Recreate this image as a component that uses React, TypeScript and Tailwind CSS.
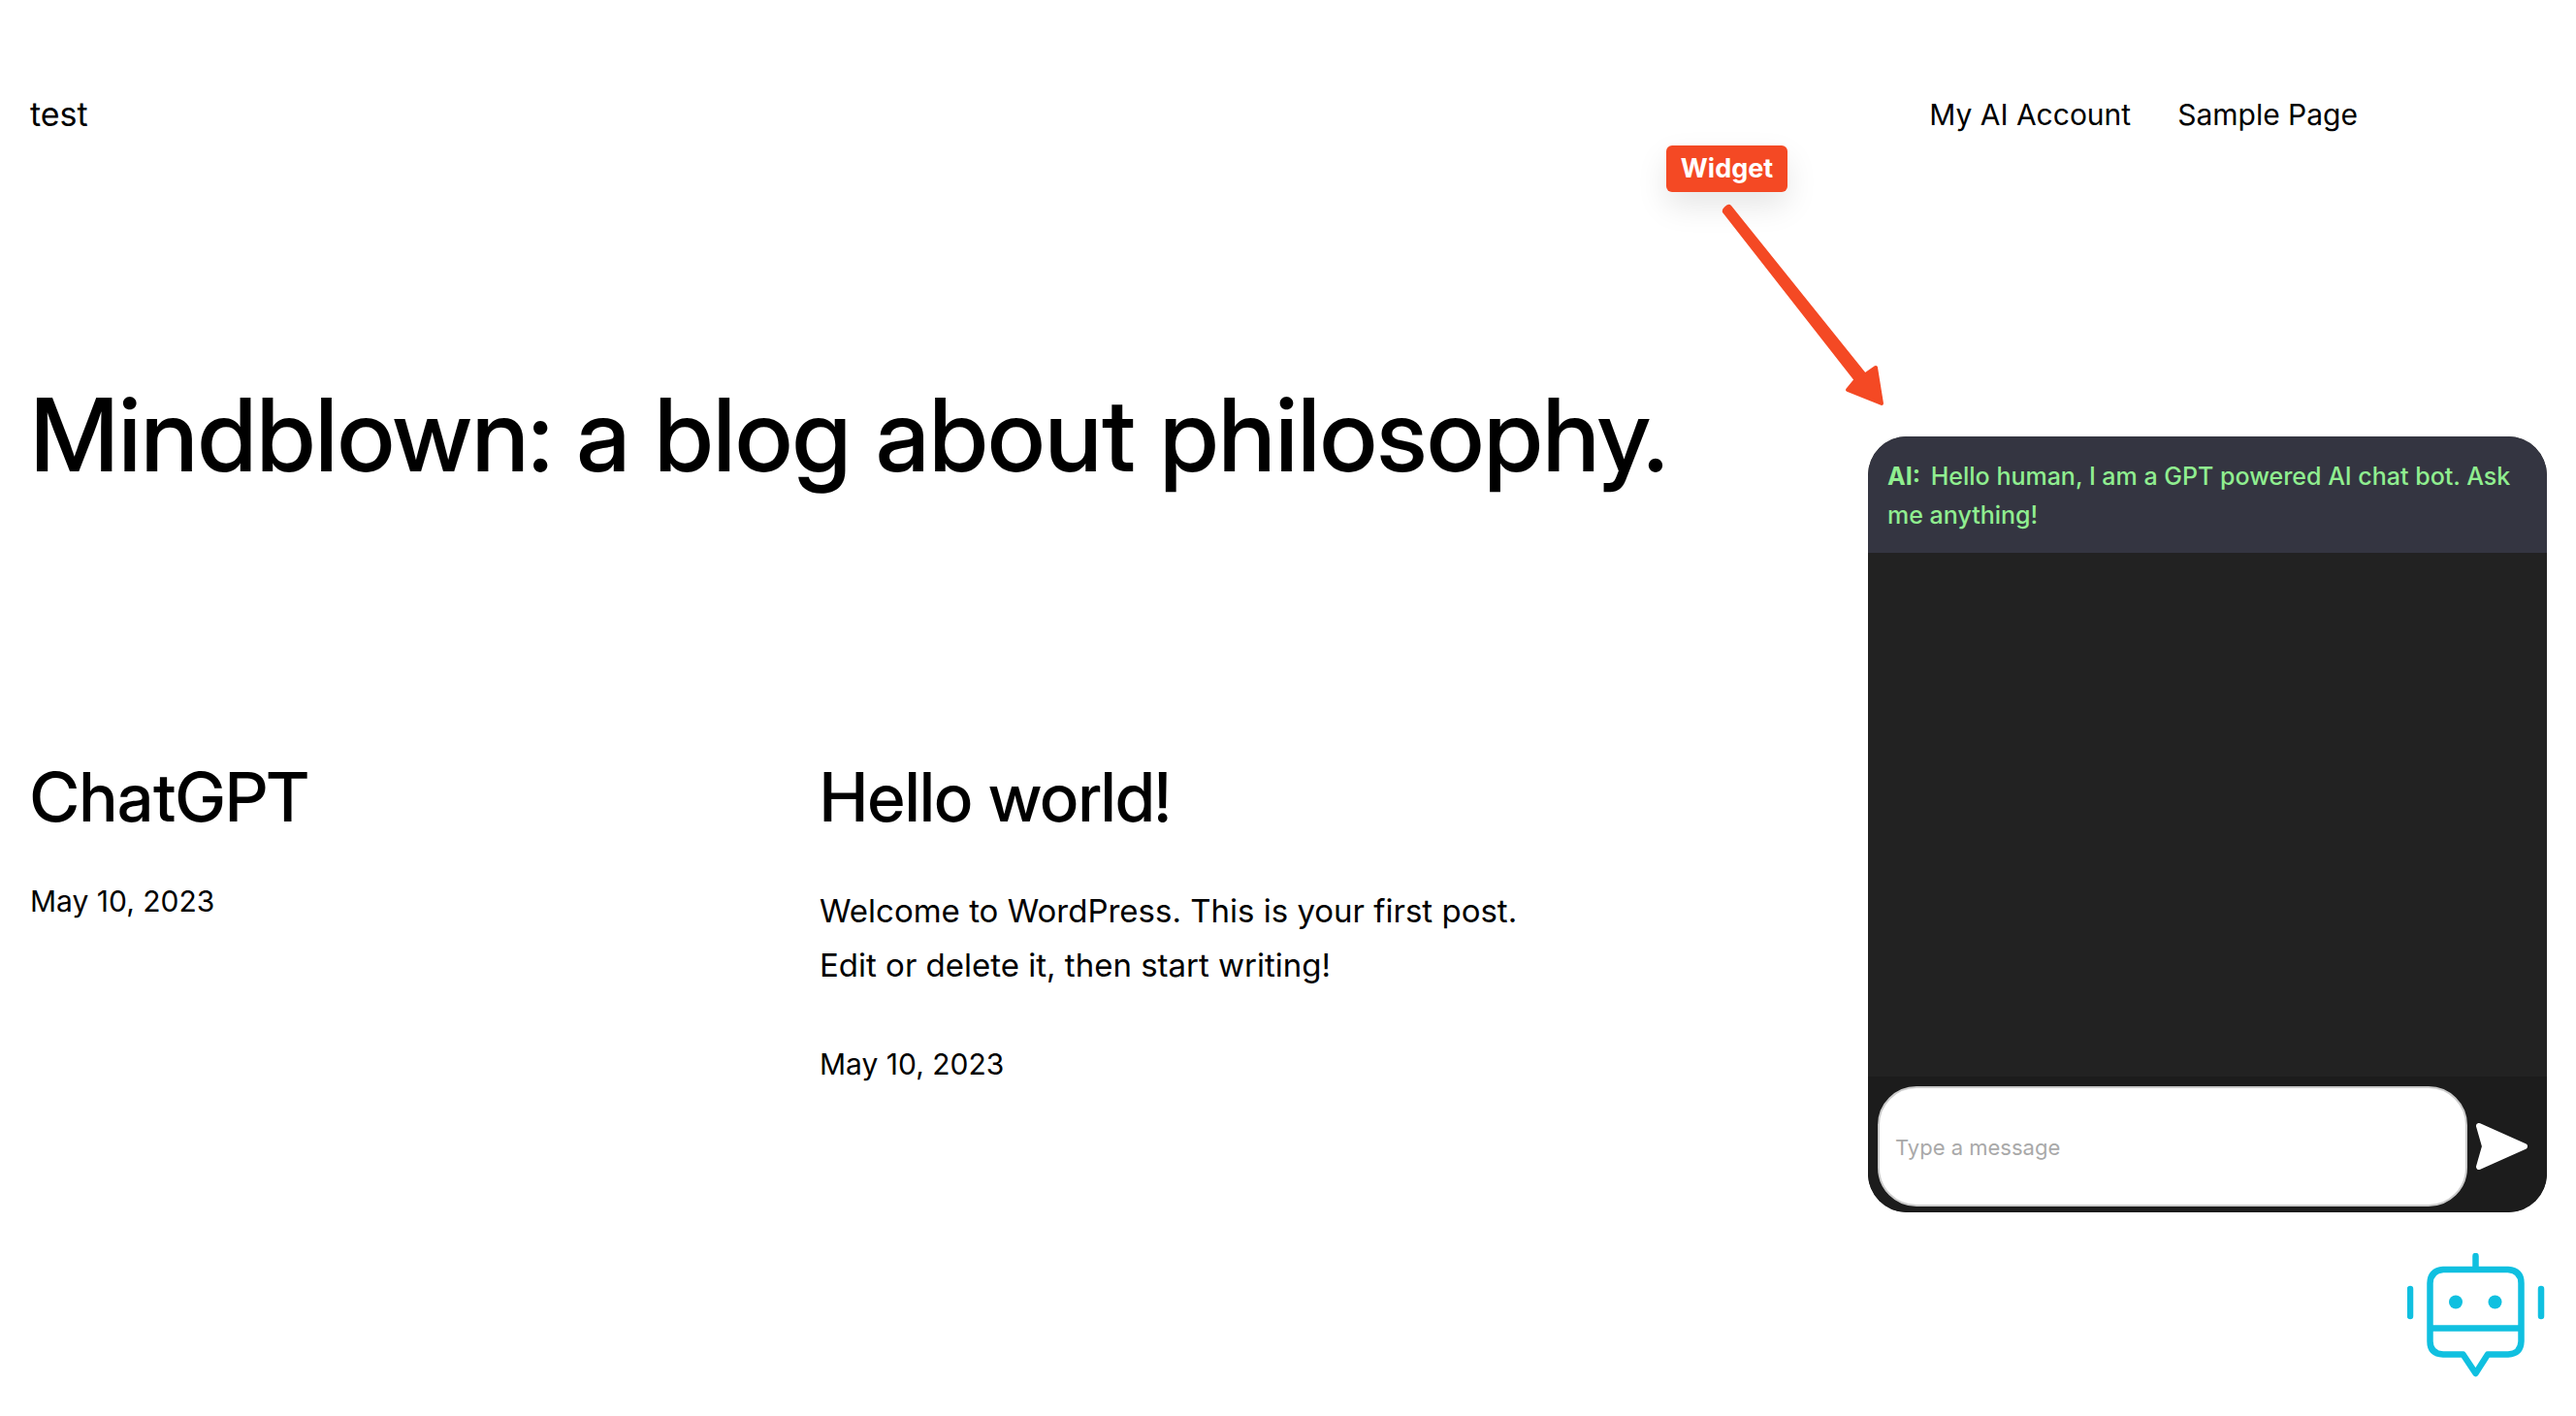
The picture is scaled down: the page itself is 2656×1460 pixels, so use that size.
import type { FormEvent } from "react";

const posts = [
  { title: "ChatGPT", excerpt: "", date: "May 10, 2023" },
  {
    title: "Hello world!",
    excerpt: "Welcome to WordPress. This is your first post. Edit or delete it, then start writing!",
    date: "May 10, 2023",
  },
];

function SiteHeader() {
  return (
    <header className="flex h-14 items-center justify-between">
      <a href="#home" className="text-[34px] leading-[54px]">test</a>
      <nav className="flex gap-12 text-[30px] leading-[54px]">
        <a href="#account">My AI Account</a>
        <a href="#sample">Sample Page</a>
      </nav>
    </header>
  );
}

function Post({ title, excerpt, date }: (typeof posts)[number]) {
  return (
    <article>
      <h2 className="font-['Inter_Display',Inter,sans-serif] text-[70px] leading-[84px] font-medium">
        <a href="#post">{title}</a>
      </h2>
      {excerpt && <p className="mt-[47px] text-[33px] leading-14">{excerpt}</p>}
      <time
        dateTime="2023-05-10"
        className={excerpt ? "mt-[52px] block text-[30px] leading-11" : "mt-[43px] block text-[30px] leading-11"}
      >
        {date}
      </time>
    </article>
  );
}

function Callout() {
  return (
    <div className="absolute top-[150px] right-[700px] w-[238px]">
      <div className="flex h-12 w-[125px] items-center justify-center rounded-md bg-[#f44924] text-[27px] font-bold text-white shadow-[0_14px_32px_rgba(0,0,0,0.1)]">
        Widget
      </div>
      <svg viewBox="0 0 176 216" className="absolute top-[57px] left-[55px] h-[216px] w-[176px]" fill="#f44924">
        <path d="M3 12 Q2 9 5 6.500 Q9 2 12 5 L151 178 L140 187 Z" />
        <path d="M148 181 L161 172 L167 209 L132 195 L141 184 Z" stroke="#f44924" strokeWidth="4" strokeLinejoin="round" />
      </svg>
    </div>
  );
}

function ChatWidget() {
  const handleSubmit = (event: FormEvent) => event.preventDefault();
  return (
    <section
      aria-label="AI chat"
      className="fixed right-[30px] bottom-[210px] flex h-[800px] w-[700px] flex-col overflow-hidden rounded-[40px] bg-[#222222]"
    >
      <p className="min-h-[120px] bg-[#343541] px-5 pt-[21px] text-[25px] leading-10 font-medium text-[#90ee90]">
        <strong className="mr-1 font-bold">AI:</strong> Hello human, I am a GPT powered AI chat bot. Ask me anything!
      </p>
      <div className="flex-1" />
      <form className="flex items-center gap-2 bg-[#1c1c1c] pt-[10px] pr-5 pb-[6px] pl-[10px]" onSubmit={handleSubmit}>
        <input
          aria-label="Message"
          placeholder="Type a message"
          className="h-[124px] min-w-0 flex-1 rounded-[40px] border-2 border-[#cccccc] bg-white px-4 pt-[2px] text-[22px] text-black placeholder:text-[#a9a9a9]"
        />
        <button type="submit" aria-label="Send">
          <svg viewBox="0 0 54 50" className="h-[50px] w-[54px]" fill="#fff" stroke="#fff" strokeWidth="6" strokeLinejoin="round">
            <path d="M4 4 L51 25 L4 46 L10 25 Z" />
          </svg>
        </button>
      </form>
    </section>
  );
}

function BotButton() {
  return (
    <button type="button" aria-label="Open AI chat" className="fixed right-[30px] bottom-[38px]">
      <svg
        viewBox="0 0 144 130"
        className="h-[130px] w-[144px]"
        fill="none"
        stroke="#10c0e0"
        strokeWidth="6.500"
        strokeLinecap="round"
        strokeLinejoin="round"
      >
        <path d="M70.500 3 V16 M3 37 V65 M138 37 V65" />
        <path d="M37 17 H104 Q117.500 18 117.500 31 V91 Q117 104 104 104.500 H83 L70.500 124 L57.500 104.500 H37 Q23.500 104 23.500 91 V31 Q24 18 37 17 Z M23.500 77.500 H117.500" />
        <circle cx="50" cy="50.500" r="7" fill="#10c0e0" stroke="none" />
        <circle cx="90.500" cy="50.500" r="7" fill="#10c0e0" stroke="none" />
      </svg>
    </button>
  );
}

export default function App() {
  return (
    <div className="relative min-h-screen bg-white font-[Inter,sans-serif] text-black">
      <div className="max-w-[2462px] px-[31px] pt-[90px]">
        <SiteHeader />
        <main>
          <h1 className="mt-60 font-['Inter_Display',Inter,sans-serif] text-[105px] leading-[124px] font-medium">
            Mindblown: a blog about philosophy.
          </h1>
          <div className="mt-[270px] grid grid-cols-3 gap-[42px]">
            {posts.map((post) => (
              <Post key={post.title} {...post} />
            ))}
          </div>
        </main>
      </div>
      <Callout />
      <ChatWidget />
      <BotButton />
    </div>
  );
}
